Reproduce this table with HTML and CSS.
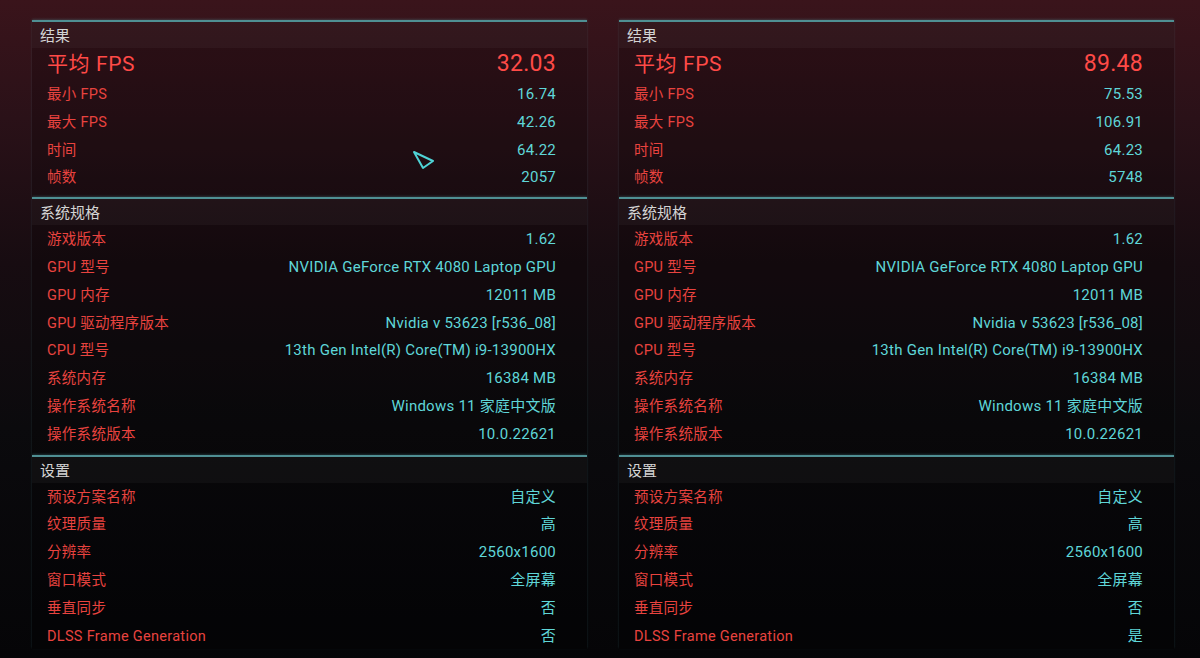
FILE: index.html
```html
<!DOCTYPE html>
<html lang="zh-CN">
<head>
<meta charset="utf-8">
<title>基准测试结果</title>
<link rel="stylesheet" href="styles.css">
</head>
<body>
<div class="screen">
  <div class="panel">
    <section class="group group-results">
      <div class="group-title">结果</div>
      <div class="row row-main"><span class="label">平均 FPS</span><span class="value">32.03</span></div>
      <div class="row"><span class="label">最小 FPS</span><span class="value">16.74</span></div>
      <div class="row"><span class="label">最大 FPS</span><span class="value">42.26</span></div>
      <div class="row"><span class="label">时间</span><span class="value">64.22</span></div>
      <div class="row"><span class="label">帧数</span><span class="value">2057</span></div>
    </section>
    <section class="group group-specs">
      <div class="group-title">系统规格</div>
      <div class="row"><span class="label">游戏版本</span><span class="value">1.62</span></div>
      <div class="row"><span class="label">GPU 型号</span><span class="value">NVIDIA GeForce RTX 4080 Laptop GPU</span></div>
      <div class="row"><span class="label">GPU 内存</span><span class="value">12011 MB</span></div>
      <div class="row"><span class="label">GPU 驱动程序版本</span><span class="value">Nvidia v 53623 [r536_08]</span></div>
      <div class="row"><span class="label">CPU 型号</span><span class="value">13th Gen Intel(R) Core(TM) i9-13900HX</span></div>
      <div class="row"><span class="label">系统内存</span><span class="value">16384 MB</span></div>
      <div class="row"><span class="label">操作系统名称</span><span class="value">Windows 11 家庭中文版</span></div>
      <div class="row"><span class="label">操作系统版本</span><span class="value">10.0.22621</span></div>
    </section>
    <section class="group group-settings">
      <div class="group-title">设置</div>
      <div class="row"><span class="label">预设方案名称</span><span class="value">自定义</span></div>
      <div class="row"><span class="label">纹理质量</span><span class="value">高</span></div>
      <div class="row"><span class="label">分辨率</span><span class="value">2560x1600</span></div>
      <div class="row"><span class="label">窗口模式</span><span class="value">全屏幕</span></div>
      <div class="row"><span class="label">垂直同步</span><span class="value">否</span></div>
      <div class="row"><span class="label">DLSS Frame Generation</span><span class="value">否</span></div>
    </section>
    <svg class="cursor" width="24" height="22" viewBox="0 0 24 22" aria-hidden="true">
      <path d="M2 2 L21 11 L11 18 Z" fill="none" stroke="#4fd3d6" stroke-width="2" stroke-linejoin="round"/>
    </svg>
  </div>

  <div class="panel">
    <section class="group group-results">
      <div class="group-title">结果</div>
      <div class="row row-main"><span class="label">平均 FPS</span><span class="value">89.48</span></div>
      <div class="row"><span class="label">最小 FPS</span><span class="value">75.53</span></div>
      <div class="row"><span class="label">最大 FPS</span><span class="value">106.91</span></div>
      <div class="row"><span class="label">时间</span><span class="value">64.23</span></div>
      <div class="row"><span class="label">帧数</span><span class="value">5748</span></div>
    </section>
    <section class="group group-specs">
      <div class="group-title">系统规格</div>
      <div class="row"><span class="label">游戏版本</span><span class="value">1.62</span></div>
      <div class="row"><span class="label">GPU 型号</span><span class="value">NVIDIA GeForce RTX 4080 Laptop GPU</span></div>
      <div class="row"><span class="label">GPU 内存</span><span class="value">12011 MB</span></div>
      <div class="row"><span class="label">GPU 驱动程序版本</span><span class="value">Nvidia v 53623 [r536_08]</span></div>
      <div class="row"><span class="label">CPU 型号</span><span class="value">13th Gen Intel(R) Core(TM) i9-13900HX</span></div>
      <div class="row"><span class="label">系统内存</span><span class="value">16384 MB</span></div>
      <div class="row"><span class="label">操作系统名称</span><span class="value">Windows 11 家庭中文版</span></div>
      <div class="row"><span class="label">操作系统版本</span><span class="value">10.0.22621</span></div>
    </section>
    <section class="group group-settings">
      <div class="group-title">设置</div>
      <div class="row"><span class="label">预设方案名称</span><span class="value">自定义</span></div>
      <div class="row"><span class="label">纹理质量</span><span class="value">高</span></div>
      <div class="row"><span class="label">分辨率</span><span class="value">2560x1600</span></div>
      <div class="row"><span class="label">窗口模式</span><span class="value">全屏幕</span></div>
      <div class="row"><span class="label">垂直同步</span><span class="value">否</span></div>
      <div class="row"><span class="label">DLSS Frame Generation</span><span class="value">是</span></div>
    </section>
  </div>
</div>
</body>
</html>
```

FILE: styles.css
```css
* {
  box-sizing: border-box;
}

html, body {
  margin: 0;
  padding: 0;
  height: 100%;
}

body {
  width: 1200px;
  height: 658px;
  overflow: hidden;
  font-family: "Roboto", "Noto Sans CJK SC", sans-serif;
  background: linear-gradient(180deg, #3a141b 0%, #2a1118 18%, #170c11 40%, #0b0a0d 65%, #050507 100%);
  color: #d8d8d8;
}

.screen {
  display: flex;
  gap: 32px;
  padding: 20px 0 0 32px;
}

.panel {
  position: relative;
  width: 555px;
  background: rgba(0, 0, 0, 0.18);
}

.group {
  border-top: 2px solid #4f8f93;
  box-shadow: 0 -1px 2px rgba(90, 170, 175, 0.25);
}

.group-results {
  padding-bottom: 6px;
}

.group-specs {
  padding-bottom: 7px;
}

.group-title {
  height: 26px;
  padding: 2px 0 0 8px;
  display: flex;
  align-items: center;
  font-size: 15px;
  line-height: 20px;
  color: #d4d4d4;
  background: rgba(255, 255, 255, 0.035);
}

.row {
  height: 27.8px;
  display: flex;
  align-items: baseline;
  justify-content: space-between;
  padding: 4px 31px 0 15px;
  font-size: 14.5px;
  line-height: 20px;
}

.label {
  color: #e8433f;
  letter-spacing: 0.3px;
}

.value {
  color: #5fd6d8;
  font-size: 15px;
  letter-spacing: 0.25px;
}

.row-main {
  height: 32px;
  padding-top: 2px;
}

.row-main .label {
  font-size: 21px;
  line-height: 28px;
  color: #ff4a47;
  letter-spacing: 0.6px;
}

.row-main .value {
  font-size: 23px;
  line-height: 28px;
  color: #ff4a47;
  letter-spacing: 0.3px;
}

.cursor {
  position: absolute;
  left: 380px;
  top: 130px;
}
```
